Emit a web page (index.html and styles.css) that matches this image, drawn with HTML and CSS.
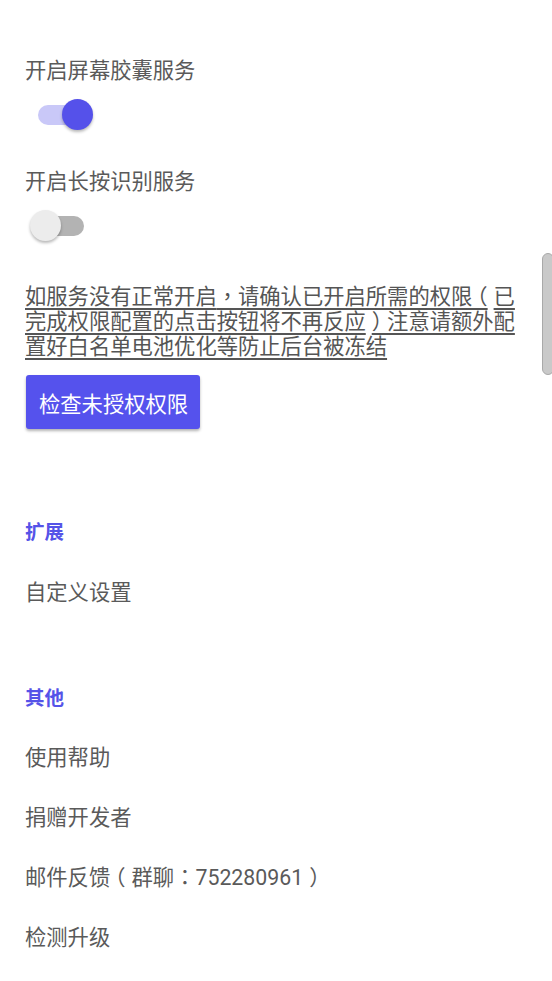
FILE: index.html
```html
<!DOCTYPE html>
<html lang="zh-CN">
<head>
<meta charset="utf-8">
<title>设置</title>
<link rel="stylesheet" href="styles.css">
</head>
<body>
<div class="page">
  <section class="group group-services">
    <div class="pref-title">开启屏幕胶囊服务</div>
    <div class="switch-row">
      <div class="switch on"><span class="track"></span><span class="thumb"></span></div>
    </div>
    <div class="pref-title title-second">开启长按识别服务</div>
    <div class="switch-row">
      <div class="switch off"><span class="track"></span><span class="thumb"></span></div>
    </div>
    <p class="notice">如服务没有正常开启<span class="punct" lang="zh-TW">，</span>请确认已开启所需的权限<span class="punct open" lang="zh-TW">（</span>已完成权限配置的点击按钮将不再反应<span class="punct close" lang="zh-TW">）</span>注意请额外配置好白名单电池优化等防止后台被冻结</p>
    <button class="check-btn" type="button">检查未授权权限</button>
  </section>

  <section class="group group-ext">
    <div class="category">扩展</div>
    <div class="item">自定义设置</div>
  </section>

  <section class="group group-other">
    <div class="category">其他</div>
    <div class="item">使用帮助</div>
    <div class="item">捐赠开发者</div>
    <div class="item">邮件反馈<span class="punct open" lang="zh-TW">（</span>群聊<span class="punct" lang="zh-TW">：</span>752280961<span class="punct close" lang="zh-TW">）</span></div>
    <div class="item">检测升级</div>
  </section>
</div>
<div class="scrollbar"></div>
</body>
</html>
```

FILE: styles.css
```css
html, body {
  margin: 0;
  padding: 0;
  background: #ffffff;
}

body {
  width: 552px;
  height: 981px;
  overflow: hidden;
  position: relative;
  font-family: Roboto, "Noto Sans CJK SC", "Noto Sans", sans-serif;
  color: #5a5a5a;
}

.page {
  padding: 56px 30px 0 25px;
}

.punct {
  font-family: "Noto Sans CJK TC", "Noto Sans CJK SC", sans-serif;
  line-height: 1;
}

.punct.open {
  margin-left: -0.28em;
  margin-right: 0.28em;
}

.punct.close {
  margin-left: 0.28em;
  margin-right: -0.28em;
}

.pref-title {
  font-size: 21.3px;
  line-height: 30px;
  height: 30px;
}

.title-second {
  margin-top: 23px;
}

.switch-row {
  height: 58px;
  display: flex;
  align-items: center;
}

.switch {
  position: relative;
  width: 68px;
  height: 32px;
  margin-left: 4px;
}

.switch .track {
  position: absolute;
  left: 9px;
  top: 6px;
  width: 46px;
  height: 20px;
  border-radius: 10px;
}

.switch .thumb {
  position: absolute;
  top: 0;
  width: 31px;
  height: 31px;
  border-radius: 50%;
  box-shadow: 0 2px 3px rgba(0, 0, 0, 0.28);
}

.switch.on .track {
  background: #c9c8f8;
}

.switch.on .thumb {
  left: 32.5px;
  background: #5551ea;
}

.switch.off .track {
  background: #b3b3b3;
}

.switch.off .thumb {
  left: 0.5px;
  background: #ececec;
}

.notice {
  margin: 29px 0 0 0;
  font-size: 21.3px;
  line-height: 25px;
  text-decoration: underline;
  text-underline-offset: 4px;
  text-decoration-thickness: 1.5px;
  color: #555555;
}

.check-btn {
  display: block;
  margin: 16px 0 0 1px;
  height: 54px;
  padding: 0 12px 0 13px;
  border: none;
  border-radius: 3px;
  background: #5552ed;
  color: #ffffff;
  font-family: Roboto, "Noto Sans CJK SC", sans-serif;
  font-size: 21.3px;
  box-shadow: 0 2px 3px rgba(0, 0, 0, 0.3);
}

.group-ext {
  margin-top: 89px;
}

.group-other {
  margin-top: 61px;
}

.category {
  font-size: 19.5px;
  font-weight: bold;
  line-height: 30px;
  color: #5553e8;
  margin-bottom: 14.5px;
}

.item {
  font-size: 21.3px;
  height: 60px;
  line-height: 60px;
}

.scrollbar {
  position: absolute;
  left: 542px;
  top: 253px;
  width: 12px;
  height: 122px;
  box-sizing: border-box;
  border: 1px solid #a9a9a9;
  border-radius: 6px;
  background: #c9c9c9;
}
```
